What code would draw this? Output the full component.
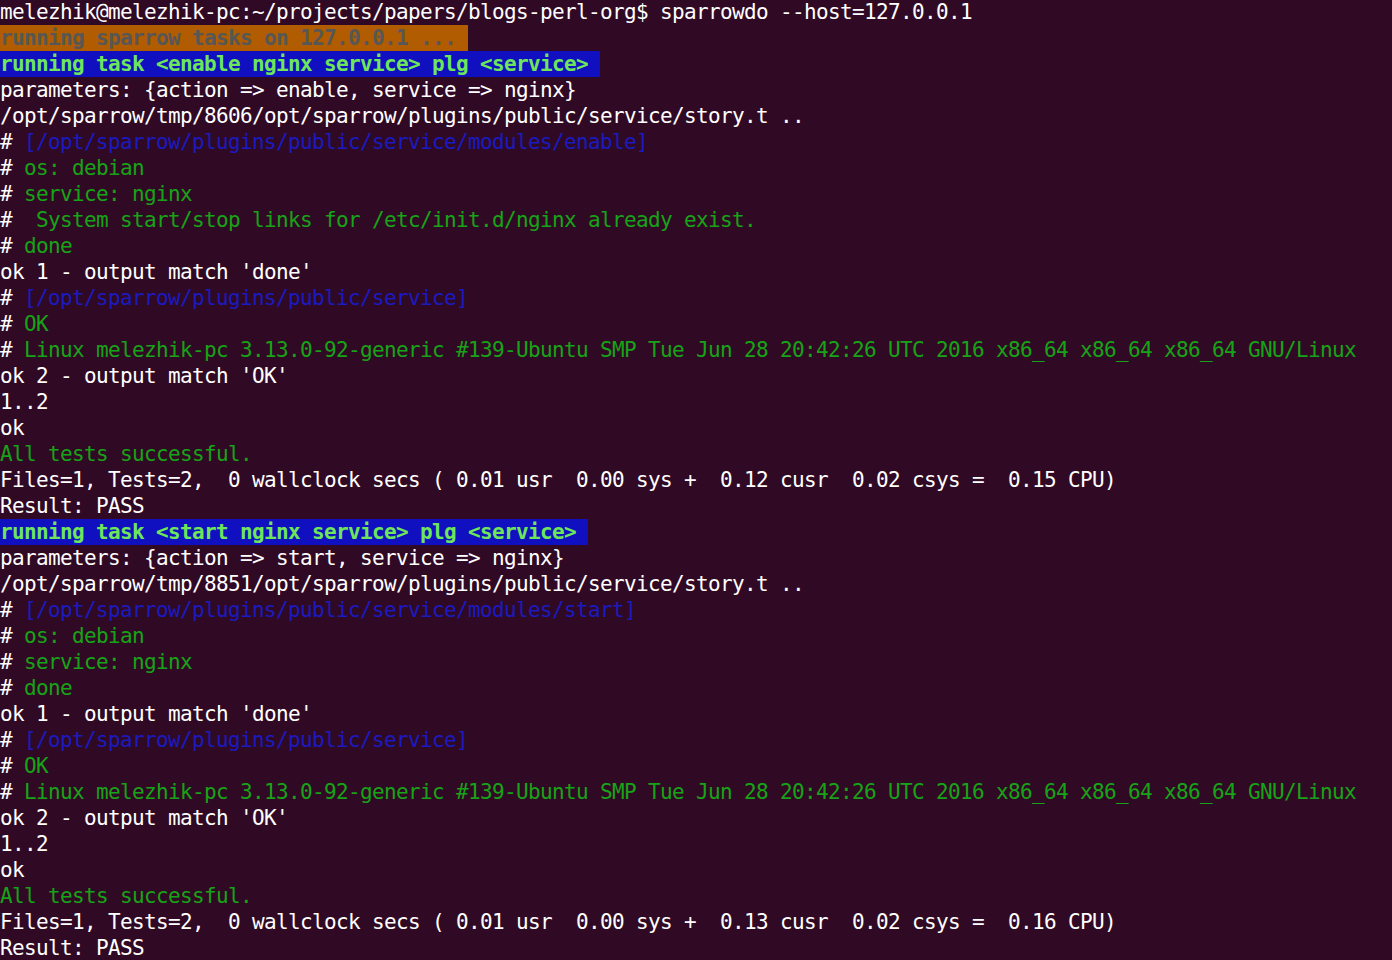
import React from "react";

type Seg = { t: string; c?: string };
type Line = Seg[];

const W = "text-[#ffffff]";
const G = "text-[#17a317]";
const B = "text-[#1a1ac0]";

function hashLine(rest: string, color: string): Line {
  return [
    { t: "#", c: W },
    { t: rest, c: color },
  ];
}

const linux =
  " Linux melezhik-pc 3.13.0-92-generic #139-Ubuntu SMP Tue Jun 28 20:42:26 UTC 2016 x86_64 x86_64 x86_64 GNU/Linux";

function block(
  action: string,
  tmp: string,
  extra: Line[],
  cusr: string,
  cpu: string
): { kind: "task" | "plain"; line?: Line; task?: string }[] {
  const out: { kind: "task" | "plain"; line?: Line; task?: string }[] = [];
  out.push({ kind: "task", task: `running task <${action} nginx service> plg <service> ` });
  const plain: Line[] = [
    [{ t: `parameters: {action => ${action}, service => nginx}`, c: W }],
    [{ t: `/opt/sparrow/tmp/${tmp}/opt/sparrow/plugins/public/service/story.t ..`, c: W }],
    hashLine(` [/opt/sparrow/plugins/public/service/modules/${action}]`, B),
    hashLine(" os: debian", G),
    hashLine(" service: nginx", G),
    ...extra,
    hashLine(" done", G),
    [{ t: "ok 1 - output match 'done'", c: W }],
    hashLine(" [/opt/sparrow/plugins/public/service]", B),
    hashLine(" OK", G),
    hashLine(linux, G),
    [{ t: "ok 2 - output match 'OK'", c: W }],
    [{ t: "1..2", c: W }],
    [{ t: "ok", c: W }],
    [{ t: "All tests successful.", c: G }],
    [
      {
        t: `Files=1, Tests=2,  0 wallclock secs ( 0.01 usr  0.00 sys +  ${cusr} cusr  0.02 csys =  ${cpu} CPU)`,
        c: W,
      },
    ],
    [{ t: "Result: PASS", c: W }],
  ];
  plain.forEach((l) => out.push({ kind: "plain", line: l }));
  return out;
}

const rows = [
  ...block(
    "enable",
    "8606",
    [hashLine("  System start/stop links for /etc/init.d/nginx already exist.", G)],
    "0.12",
    "0.15"
  ),
  ...block("start", "8851", [], "0.13", "0.16"),
];

export default function App() {
  return (
    <div
      className="w-[1392px] h-[960px] overflow-hidden bg-[#300a24] text-[21px] leading-[26px] tracking-[-0.643px] whitespace-pre"
      style={{ fontFamily: '"DejaVu Sans Mono", "Liberation Mono", monospace' }}
    >
      <div className="-mt-[1px]">
        <div className="h-[26px] text-[#ffffff]">
          melezhik@melezhik-pc:~/projects/papers/blogs-perl-org$ sparrowdo --host=127.0.0.1
        </div>
        <div className="h-[26px]">
          <span className="inline-block h-[26px] bg-[#b15c00] text-[#575757] font-bold">
            running sparrow tasks on 127.0.0.1 ...{" "}
          </span>
        </div>
        {rows.map((r, i) =>
          r.kind === "task" ? (
            <div key={i} className="h-[26px]">
              <span className="inline-block h-[26px] bg-[#1010c0] text-[#6ee65a] font-bold">
                {r.task}
              </span>
            </div>
          ) : (
            <div key={i} className="h-[26px]">
              {r.line!.map((s, j) => (
                <span key={j} className={s.c}>
                  {s.t}
                </span>
              ))}
            </div>
          )
        )}
      </div>
    </div>
  );
}
